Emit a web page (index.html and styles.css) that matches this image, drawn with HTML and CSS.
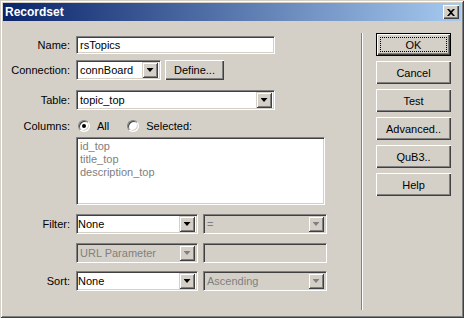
FILE: index.html
```html
<!DOCTYPE html>
<html lang="en">
  <head>
    <meta charset="UTF-8" />
    <title>Recordset</title>
    <link rel="stylesheet" href="styles.css">
  </head>
  <body>
    <div class="window">
      <div class="titlebar">
        <span class="title">Recordset</span>
        <span class="close">
          <svg width="8" height="7" viewBox="0 0 8 7"><path d="M0 0h2l2 2 2-2h2L5 3.5 8 7H6L4 5 2 7H0l3-3.5z" fill="#000"/></svg>
        </span>
      </div>
      <div class="content">
        <div class="form">
          <div class="row r-name">
            <label class="lbl">Name:</label>
            <div class="field w-name">rsTopics</div>
          </div>
          <div class="row r-conn">
            <label class="lbl">Connection:</label>
            <div class="field select w-conn">connBoard<span class="arrow"><i></i></span></div>
            <div class="btn small">Define...</div>
          </div>
          <div class="row r-table">
            <label class="lbl">Table:</label>
            <div class="field select w-name">topic_top<span class="arrow"><i></i></span></div>
          </div>
          <div class="row r-cols">
            <label class="lbl">Columns:</label>
            <span class="radio checked"></span><span class="rtext">All</span>
            <span class="radio second"></span><span class="rtext">Selected:</span>
          </div>
          <div class="row r-list">
            <span class="lbl"></span>
            <div class="listbox">
              <div>id_top</div>
              <div>title_top</div>
              <div>description_top</div>
            </div>
          </div>
          <div class="row r-filter">
            <label class="lbl">Filter:</label>
            <div class="field select w-half tight">None<span class="arrow"><i></i></span></div>
            <div class="field select w-half2 off">=<span class="arrow"><i></i></span></div>
          </div>
          <div class="row r-url">
            <span class="lbl"></span>
            <div class="field select w-half off">URL Parameter<span class="arrow"><i></i></span></div>
            <div class="field w-half2 off"></div>
          </div>
          <div class="row r-sort">
            <label class="lbl">Sort:</label>
            <div class="field select w-half tight">None<span class="arrow"><i></i></span></div>
            <div class="field select w-half2 off">Ascending<span class="arrow"><i></i></span></div>
          </div>
        </div>
        <div class="sep"></div>
        <div class="buttons">
          <div class="btn default"><span class="focus">OK</span></div>
          <div class="btn">Cancel</div>
          <div class="btn">Test</div>
          <div class="btn">Advanced..</div>
          <div class="btn">QuB3..</div>
          <div class="btn">Help</div>
        </div>
      </div>
    </div>
  </body>
</html>
```

FILE: styles.css
```css
* {
  box-sizing: border-box;
}
body {
  margin: 0;
  font-family: "Liberation Sans", Arial, sans-serif;
  font-size: 11px;
  color: #000;
  background: #d4d0c8;
}
.window {
  width: 464px;
  height: 318px;
  padding: 3px;
  background: #d4d0c8;
  box-shadow: inset 1px 1px #d4d0c8, inset -1px -1px #404040, inset 2px 2px #fff, inset -2px -2px #808080;
}
.titlebar {
  height: 18px;
  display: flex;
  align-items: center;
  padding: 0 2px;
  background: linear-gradient(to right, #0a246a, #a6caf0);
}
.title {
  color: #fff;
  font-weight: bold;
  font-size: 12px;
}
.close {
  margin-left: auto;
  width: 16px;
  height: 14px;
  display: flex;
  align-items: center;
  justify-content: center;
  background: #d4d0c8;
  box-shadow: inset 1px 1px #fff, inset -1px -1px #404040, inset -2px -2px #808080;
}
.close svg {
  display: block;
}
.content {
  display: flex;
  padding-top: 12px;
}
.form {
  width: 358px;
  padding-top: 3px;
}
.row {
  display: flex;
  align-items: center;
}
.lbl {
  width: 67px;
  margin-right: 6px;
  text-align: right;
  flex-shrink: 0;
}
.r-name { height: 18px; margin-bottom: 6px; }
.r-conn { height: 20px; margin-bottom: 10px; }
.r-table { height: 20px; margin-bottom: 8px; }
.r-cols { height: 16px; margin-bottom: 3px; }
.r-list { margin-bottom: 9px; align-items: flex-start; }
.r-filter { height: 20px; margin-bottom: 9px; }
.r-url { height: 20px; margin-bottom: 8px; }
.r-sort { height: 20px; }

.field {
  height: 20px;
  display: flex;
  align-items: center;
  padding: 0 2px 0 3px;
  background: #fff;
  border: 1px solid;
  border-color: #808080 #fff #fff #808080;
  box-shadow: inset 1px 1px #404040, inset -1px -1px #d4d0c8;
  white-space: nowrap;
}
.r-name .field {
  height: 18px;
}
.field.tight {
  padding-left: 1px;
}
.field.off {
  background: #d4d0c8;
  color: #808080;
}
.w-name { width: 199px; }
.w-conn { width: 85px; margin-right: 4px; }
.w-half { width: 122px; margin-right: 5px; }
.w-half2 { width: 124px; }
.arrow {
  margin-left: auto;
  width: 16px;
  height: 16px;
  display: flex;
  align-items: center;
  justify-content: center;
  background: #d4d0c8;
  box-shadow: inset 1px 1px #d4d0c8, inset -1px -1px #404040, inset 2px 2px #fff, inset -2px -2px #808080;
}
.arrow i {
  display: block;
  width: 7px;
  height: 4px;
  background: #000;
  clip-path: polygon(0 0, 100% 0, 50% 100%);
}
.off .arrow i {
  background: #808080;
}
.btn {
  width: 75px;
  height: 23px;
  display: flex;
  align-items: center;
  justify-content: center;
  background: #d4d0c8;
  box-shadow: inset 1px 1px #fff, inset -1px -1px #404040, inset -2px -2px #808080;
}
.btn.small {
  width: 59px;
  height: 20px;
}
.btn.default {
  border: 1px solid #000;
  padding: 3px;
}
.focus {
  width: 100%;
  height: 100%;
  display: flex;
  align-items: center;
  justify-content: center;
  border: 1px dotted #000;
}
.radio {
  width: 12px;
  height: 12px;
  margin-left: 2px;
  border-radius: 50%;
  background: #fff;
  border: 1px solid;
  border-color: #808080 #fff #fff #808080;
  box-shadow: inset 1px 1px #404040, inset -1px -1px #d4d0c8;
  display: flex;
  align-items: center;
  justify-content: center;
}
.radio.checked::after {
  content: "";
  width: 4px;
  height: 4px;
  border-radius: 50%;
  background: #000;
}
.radio.second {
  margin-left: 18px;
}
.rtext {
  margin-left: 7px;
}
.listbox {
  width: 249px;
  height: 68px;
  padding: 2px 3px;
  background: #fff;
  color: #808080;
  line-height: 13px;
  border: 1px solid;
  border-color: #808080 #fff #fff #808080;
  box-shadow: inset 1px 1px #404040, inset -1px -1px #d4d0c8;
}
.sep {
  width: 2px;
  height: 277px;
  border-left: 1px solid #808080;
  border-right: 1px solid #fff;
}
.buttons {
  margin-left: 13px;
  display: flex;
  flex-direction: column;
  gap: 5px;
}
```
